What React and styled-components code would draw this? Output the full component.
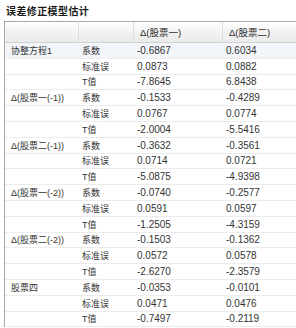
import styled, { createGlobalStyle } from 'styled-components';

const GROUPS = [
  { name: '协整方程1', rows: [['-0.6867', '0.6034'], ['0.0873', '0.0882'], ['-7.8645', '6.8438']] },
  { name: 'Δ(股票一(-1))', rows: [['-0.1533', '-0.4289'], ['0.0767', '0.0774'], ['-2.0004', '-5.5416']] },
  { name: 'Δ(股票二(-1))', rows: [['-0.3632', '-0.3561'], ['0.0714', '0.0721'], ['-5.0875', '-4.9398']] },
  { name: 'Δ(股票一(-2))', rows: [['-0.0740', '-0.2577'], ['0.0591', '0.0597'], ['-1.2505', '-4.3159']] },
  { name: 'Δ(股票二(-2))', rows: [['-0.1503', '-0.1362'], ['0.0572', '0.0578'], ['-2.6270', '-2.3579']] },
  { name: '股票四', rows: [['-0.0353', '-0.0101'], ['0.0471', '0.0476'], ['-0.7497', '-0.2119']] },
];

const STATS = ['系数', '标准误', 'T值'];

const GlobalStyle = createGlobalStyle`
  html, body {
    margin: 0;
    padding: 0;
    background: #ffffff;
    overflow: hidden;
  }
  body {
    font-family: "Liberation Sans", "Noto Sans CJK SC", sans-serif;
    color: #333;
  }
`;

const App = () => {
  return (
    <>
      <GlobalStyle />
      <Wrapper>
        <Title>误差修正模型估计</Title>
        <Panel>
          <HeadRow>
            <HeadCell />
            <HeadCell />
            <HeadCell>Δ(股票一)</HeadCell>
            <HeadCell>Δ(股票二)</HeadCell>
          </HeadRow>
          {GROUPS.map((group, gi) =>
            group.rows.map((vals, ri) => (
              <Row key={`${gi}-${ri}`} active={gi === 0 && ri === 0}>
                <NameCell>{ri === 0 ? group.name : ''}</NameCell>
                <StatCell>{STATS[ri]}</StatCell>
                <NumCell>{vals[0]}</NumCell>
                <NumCell>{vals[1]}</NumCell>
              </Row>
            ))
          )}
        </Panel>
      </Wrapper>
    </>
  );
};

export default App;

const Wrapper = styled.div`
  width: 296px;
  height: 328px;
  display: flex;
  flex-direction: column;
  overflow: hidden;
`;

const Title = styled.div`
  height: 21px;
  padding-left: 6px;
  display: flex;
  align-items: center;
  font-family: "Noto Sans CJK SC", sans-serif;
  font-size: 10px;
  font-weight: 700;
  letter-spacing: 0.4px;
  color: #1a1a1a;
`;

const Panel = styled.div`
  margin-left: 4px;
  width: 320px;
  border-left: 1px solid #a8a8a8;
  border-top: 1px solid #a8a8a8;
  display: flex;
  flex-direction: column;
`;

const cols = '74px 55px 89px 1fr';

const HeadRow = styled.div`
  display: grid;
  grid-template-columns: ${cols};
  height: 20px;
  background: linear-gradient(#ffffff, #f1f1f1 55%, #ebebeb);
  border-bottom: 1px solid #d2d2d2;
`;

const HeadCell = styled.div`
  display: flex;
  align-items: center;
  padding-left: 6px;
  border-right: 1px solid #dedede;
  font-size: 9.5px;
  color: #2e2e2e;
  white-space: nowrap;
`;

const Row = styled.div`
  display: grid;
  grid-template-columns: ${cols};
  height: 15.8px;
  box-sizing: border-box;
  border-bottom: 1px solid #ececec;
  background: ${props => (props.active ? '#f2f5f9' : '#ffffff')};
`;

const Cell = styled.div`
  display: flex;
  align-items: center;
  white-space: nowrap;
  font-size: 9px;
  color: #333333;
`;

const NameCell = styled(Cell)`
  padding-left: 6px;
`;

const StatCell = styled(Cell)`
  padding-left: 3px;
`;

const NumCell = styled(Cell)`
  padding-left: 3px;
  font-size: 10px;
`;
